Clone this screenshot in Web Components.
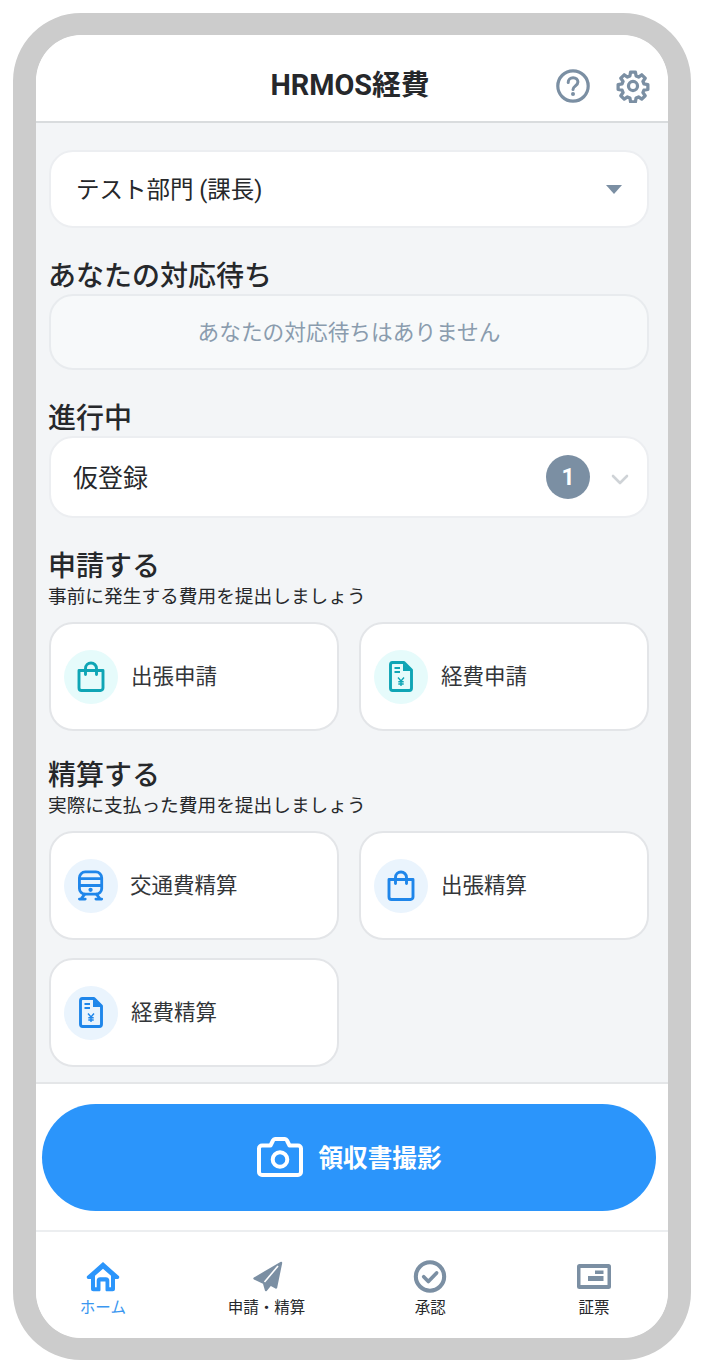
<!DOCTYPE html>
<html lang="ja">
<head>
<meta charset="utf-8">
<title>HRMOS経費</title>
<style>
  html, body { margin: 0; background: #fff; }
  body { font-family: Roboto, "Noto Sans CJK JP", sans-serif; color: #26282b; }
</style>
</head>
<body>
<hr-phone>
  <hr-header slot="header" title-text="HRMOS経費"></hr-header>

  <hr-select>テスト部門 (課長)</hr-select>

  <hr-heading style="margin-top:32px">あなたの対応待ち</hr-heading>
  <hr-empty>あなたの対応待ちはありません</hr-empty>

  <hr-heading style="margin-top:32px">進行中</hr-heading>
  <hr-progress count="1">仮登録</hr-progress>

  <hr-heading style="margin-top:32px" sub="事前に発生する費用を提出しましょう">申請する</hr-heading>
  <hr-grid>
    <hr-action icon="bag" tone="teal">出張申請</hr-action>
    <hr-action icon="doc" tone="teal">経費申請</hr-action>
  </hr-grid>

  <hr-heading style="margin-top:28px" sub="実際に支払った費用を提出しましょう">精算する</hr-heading>
  <hr-grid>
    <hr-action icon="train" tone="blue" tight>交通費精算</hr-action>
    <hr-action icon="bag" tone="blue">出張精算</hr-action>
    <hr-action icon="doc" tone="blue">経費精算</hr-action>
  </hr-grid>

  <hr-capture slot="footer">領収書撮影</hr-capture>
  <hr-tabs slot="footer">
    <hr-tab icon="home" active>ホーム</hr-tab>
    <hr-tab icon="send">申請・精算</hr-tab>
    <hr-tab icon="check">承認</hr-tab>
    <hr-tab icon="card">証票</hr-tab>
  </hr-tabs>
</hr-phone>

<script>
(function () {
  const FONT = 'Roboto, "Noto Sans CJK JP", sans-serif';

  const icons = {
    help: `<svg viewBox="0 0 36 36" fill="none"><circle cx="18" cy="18" r="15.2" stroke="currentColor" stroke-width="3.2"/><path d="M13.2 14.4c0-2.8 2.1-4.7 4.9-4.7s4.8 1.8 4.8 4.3c0 3.8-4.9 3.9-4.9 7.6" stroke="currentColor" stroke-width="3" stroke-linecap="round"/><circle cx="18" cy="26" r="2" fill="currentColor"/></svg>`,
    gear: `<svg viewBox="0 0 24 24" fill="none" stroke="currentColor" stroke-width="2.3" stroke-linejoin="round"><circle cx="12" cy="12" r="3.2"/><path d="M10.3 2.2h3.4l.5 2.8 1.7.7 2.3-1.6 2.4 2.4-1.6 2.3.7 1.7 2.8.5v3.4l-2.8.5-.7 1.7 1.6 2.3-2.4 2.4-2.3-1.6-1.7.7-.5 2.8h-3.4l-.5-2.8-1.7-.7-2.3 1.6-2.4-2.4 1.6-2.3-.7-1.7-2.8-.5v-3.4l2.8-.5.7-1.7-1.6-2.3 2.4-2.4 2.3 1.6 1.7-.7z"/></svg>`,
    bag: `<svg viewBox="0 0 28 31" fill="none" stroke="currentColor" stroke-width="2.9" stroke-linejoin="round" stroke-linecap="round"><path d="M2 9.500h24v17.500a2.500 2.500 0 0 1-2.500 2.500H4.500A2.500 2.500 0 0 1 2 27z"/><path d="M8.500 13.500V7.500a5.500 5.500 0 0 1 11 0v6"/></svg>`,
    doc: `<svg viewBox="0 0 24 31" fill="none"><path d="M3.500 1.500h11.500l7.500 7.500v18.300a2.200 2.200 0 0 1-2.200 2.200H3.700a2.200 2.200 0 0 1-2.200-2.200V3.700a2.200 2.200 0 0 1 2-2.200z" stroke="currentColor" stroke-width="2.900" stroke-linejoin="round"/><path d="M14 2v8h8.500z" fill="currentColor"/><path d="M5.500 7h5.500M5.500 11h5.500" stroke="currentColor" stroke-width="2"/><path d="M9 16.500l3 3.500 3-3.500M12 20v5M9.300 20.800h5.400M9.300 23h5.400" stroke="currentColor" stroke-width="1.400"/></svg>`,
    train: `<svg viewBox="0 0 28 32" fill="none" stroke="currentColor" stroke-width="2.900" stroke-linejoin="round"><rect x="2.500" y="2" width="23" height="23" rx="6"/><path d="M2.500 9h23M2.500 16h23"/><circle cx="14" cy="20.500" r="2.200" fill="currentColor" stroke="none"/><path d="M8 25l-4 5M20 25l4 5M2.500 30h6M19.500 30h6" stroke-linecap="round"/></svg>`,
    camera: `<svg viewBox="0 0 46 40" fill="none" stroke="currentColor" stroke-width="4" stroke-linejoin="round"><path d="M5 8.500h8.500L16 3.500c.4-.8 1-1.500 2-1.500h10c1 0 1.600.7 2 1.500l2.500 5H41a3 3 0 0 1 3 3V35a3 3 0 0 1-3 3H5a3 3 0 0 1-3-3V11.500a3 3 0 0 1 3-3z"/><circle cx="23" cy="22.500" r="7.300"/></svg>`,
    home: `<svg viewBox="0 0 34 30"><path d="M17 .5 1.200 14.600c-1 1-.3 2.800 1.100 2.800H5v10c0 1.300 1 2.300 2.300 2.300h5.800c.8 0 1.400-.6 1.400-1.300v-8.500h5v8.500c0 .7.600 1.300 1.400 1.300h5.800c1.300 0 2.300-1 2.300-2.300v-10h2.700c1.400 0 2.100-1.800 1.100-2.800z" fill="currentColor"/><path d="M9 25.800V14.300L17 7.300l8 7v11.500h-1.700v-6.500a3.500 3.500 0 0 0-3.500-3.500h-5.600a3.500 3.500 0 0 0-3.500 3.500v6.500z" fill="#fff"/></svg>`,
    send: `<svg viewBox="-3 -2 34 33"><path d="M28 1 1.500 16.500l9.500 4.500 2 7 4.500-5.500 5.500 3z" fill="currentColor" stroke="currentColor" stroke-width="2.400" stroke-linejoin="round"/><path d="M25 4 11.500 20" stroke="#fff" stroke-width="1.600" fill="none"/></svg>`,
    check: `<svg viewBox="0 0 34 34" fill="none" stroke="currentColor"><circle cx="17" cy="17" r="14.600" stroke-width="4.200"/><path d="M10.500 17.300l4.800 4.800 8.500-8.800" stroke-width="3.800" stroke-linecap="round" stroke-linejoin="round"/></svg>`,
    card: `<svg viewBox="0 0 34 25"><rect width="34" height="25" rx="2.500" fill="currentColor"/><rect x="3.500" y="4" width="27" height="17" fill="#fff"/><path d="M18 6.500h8.500v3.500H18zM11 12h15.500v5H11z" fill="currentColor"/></svg>`,
  };

  // small helper so each element only has to declare its styles and markup
  class Base extends HTMLElement {
    constructor() {
      super();
      this.attachShadow({ mode: "open" });
    }
    connectedCallback() {
      this.shadowRoot.innerHTML = `<style>${this.css()}</style>${this.html()}`;
    }
  }

  customElements.define("hr-phone", class extends Base {
    css() {
      return `
        :host { display: block; box-sizing: border-box; width: 678px; height: 1347px; margin: 13px 0 0 13px;
          border: solid #cccccc; border-width: 22px 23px; border-radius: 68px; background: #fff; overflow: hidden;
          font-family: ${FONT}; color: #26282b; }
        .wrap { display: flex; flex-direction: column; height: 100%; border-radius: 46px; overflow: hidden; }
        main { flex: 1; background: #f3f5f7; padding: 27px 19px 0 13px; min-height: 0; }
        footer { background: #fff; border-top: 2px solid #e4e6e8; }
      `;
    }
    html() {
      return `<div class="wrap"><slot name="header"></slot><main><slot></slot></main><footer><slot name="footer"></slot></footer></div>`;
    }
  });

  customElements.define("hr-header", class extends Base {
    css() {
      return `
        :host { display: flex; align-items: center; justify-content: center; position: relative; height: 88px;
          box-sizing: border-box; background: #fff; border-bottom: 2px solid #d9dcde; }
        h1 { margin: 8px 4px 0 0; font-size: 28.8px; font-weight: 700; color: #26282b; }
        .tools { position: absolute; right: 18px; top: 33px; display: flex; gap: 25px; color: #7b8fa3; }
        svg { display: block; }
        .help svg { width: 36px; height: 36px; }
        .gear svg { width: 34px; height: 34px; margin-top: 1px; }
      `;
    }
    html() {
      return `<h1>${this.getAttribute("title-text")}</h1>
        <div class="tools"><span class="help">${icons.help}</span><span class="gear">${icons.gear}</span></div>`;
    }
  });

  customElements.define("hr-select", class extends Base {
    css() {
      return `
        :host { display: flex; align-items: center; justify-content: space-between; box-sizing: border-box; height: 78px;
          padding: 0 25px 3px 25px; background: #fff; border: 2px solid #eceef1; border-radius: 24px; font-size: 23.5px; }
        i { width: 0; height: 0; margin-top: 3px; border: 8px solid transparent; border-top: 9px solid #7b8fa3; border-bottom: 0; }
      `;
    }
    html() { return `<slot></slot><i></i>`; }
  });

  customElements.define("hr-heading", class extends Base {
    css() {
      return `
        :host { display: block; margin: 0 0 0 -1px; }
        h2 { margin: 0; font-size: 28px; line-height: 34px; font-weight: 500; color: #26282b; }
        p { margin: -2px 0 10px; font-size: 18.7px; line-height: 30px; color: #26282b; }
      `;
    }
    html() {
      const sub = this.getAttribute("sub");
      return `<h2><slot></slot></h2>${sub ? `<p>${sub}</p>` : ""}`;
    }
  });

  customElements.define("hr-empty", class extends Base {
    css() {
      return `
        :host { display: flex; align-items: center; justify-content: center; box-sizing: border-box; height: 76px; padding-bottom: 4px;
          background: #f7f9fa; border: 2px solid #e8ebee; border-radius: 24px; font-size: 21.7px; color: #8a9cae; }
      `;
    }
    html() { return `<slot></slot>`; }
  });

  customElements.define("hr-progress", class extends Base {
    css() {
      return `
        :host { display: flex; align-items: center; box-sizing: border-box; height: 82px; padding: 0 18px 0 22px;
          background: #fff; border: 2px solid #eceef1; border-radius: 24px; font-size: 25px; }
        span { flex: 1; padding-bottom: 2px; }
        b { display: flex; align-items: center; justify-content: center; width: 44px; height: 44px; border-radius: 50%;
          background: #7b8fa3; color: #fff; font-size: 23px; font-weight: 700; margin-right: 21px; }
        svg { width: 18px; height: 11px; margin-top: 4px; }
      `;
    }
    html() {
      return `<span><slot></slot></span><b>${this.getAttribute("count")}</b>
        <svg viewBox="0 0 18 11" fill="none" stroke="#cfd3d7" stroke-width="2.6" stroke-linecap="round" stroke-linejoin="round"><path d="M2 2l7 7 7-7"/></svg>`;
    }
  });

  customElements.define("hr-grid", class extends Base {
    css() { return `:host { display: grid; grid-template-columns: 290px 290px; column-gap: 20px; row-gap: 18px; }`; }
    html() { return `<slot></slot>`; }
  });

  customElements.define("hr-action", class extends Base {
    css() {
      const teal = this.getAttribute("tone") === "teal";
      const tight = this.hasAttribute("tight");
      return `
        :host { display: flex; align-items: center; box-sizing: border-box; height: 109px; padding-left: 13px;
          background: #fff; border: 2px solid #e3e5e8; border-radius: 24px; font-size: 21.5px; color: #333639; }
        .ic { display: flex; align-items: center; justify-content: center; width: 54px; height: 54px; border-radius: 50%;
          margin-right: ${tight ? 12 : 13}px; background: ${teal ? "#e6fbfb" : "#eaf4fd"}; color: ${teal ? "#0fa5b5" : "#1f86ea"}; }
        svg { height: 31px; display: block; }
        .t { padding-bottom: 4px; }
      `;
    }
    html() {
      return `<span class="ic">${icons[this.getAttribute("icon")]}</span><span class="t"><slot></slot></span>`;
    }
  });

  customElements.define("hr-capture", class extends Base {
    css() {
      return `
        :host { display: flex; align-items: center; justify-content: center; box-sizing: border-box; height: 107px; padding-bottom: 3px;
          margin: 20px 12px 19px 6px; background: #2b95fb; border-radius: 54px; color: #fff; font-size: 24.6px; font-weight: 700; }
        svg { width: 46px; height: 40px; margin-right: 16px; margin-top: 2px; }
      `;
    }
    html() { return `${icons.camera}<slot></slot>`; }
  });

  customElements.define("hr-tabs", class extends Base {
    css() {
      return `:host { display: grid; grid-template-columns: repeat(4, 1fr); column-gap: 44px; padding: 27px 14px 0 7px;
        border-top: 2px solid #eceef0; height: 108px; box-sizing: border-box; }`;
    }
    html() { return `<slot></slot>`; }
  });

  customElements.define("hr-tab", class extends Base {
    css() {
      const on = this.hasAttribute("active");
      return `
        :host { display: flex; flex-direction: column; align-items: center; font-size: 15.5px; color: ${on ? "#3a97f0" : "#26282b"}; }
        .ic { display: flex; align-items: center; justify-content: center; height: 34px; color: ${on ? "#2b95fb" : "#7b8fa3"}; }
        svg { display: block; height: 33px; width: 34px; }
        span.t { margin-top: 4px; line-height: 22px; white-space: nowrap; }
      `;
    }
    html() {
      return `<span class="ic">${icons[this.getAttribute("icon")]}</span><span class="t"><slot></slot></span>`;
    }
  });
})();
</script>
</body>
</html>
